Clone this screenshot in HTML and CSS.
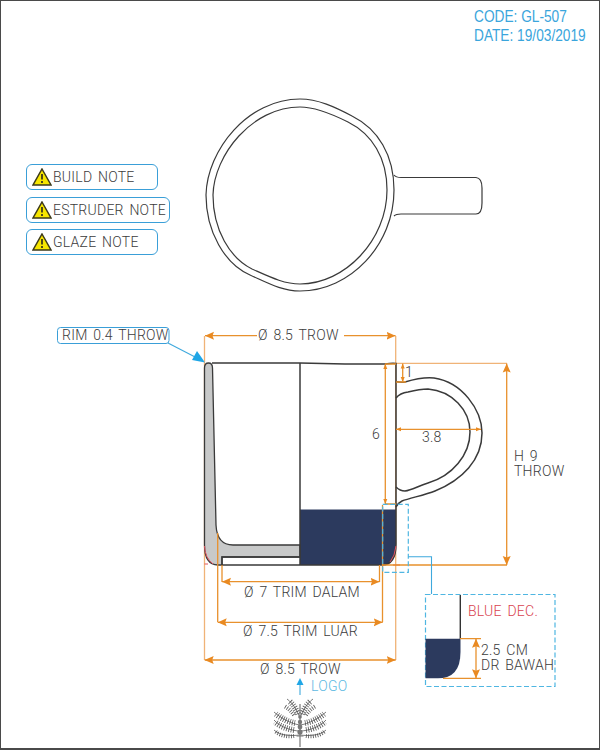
FILE: index.html
```html
<!DOCTYPE html>
<html lang="en">
<head>
    <meta charset="UTF-8">
    <title>GL-507</title>
    <link rel="stylesheet" href="styles.css">
</head>
<body>
    <div class="sheet">
        <svg class="drawing" width="600" height="750" viewBox="0 0 600 750">
            <defs>
                <marker id="arrow" markerUnits="userSpaceOnUse" markerWidth="9" markerHeight="9" refX="9" refY="4.500" orient="auto-start-reverse">
                    <path d="M9 4.500 L0 0.500 L1.500 4.500 L0 8.500 Z" class="fill_orange"/>
                </marker>
                <marker id="arrow_small" markerUnits="userSpaceOnUse" markerWidth="5" markerHeight="5" refX="5" refY="2.500" orient="auto-start-reverse">
                    <path d="M5 2.500 L0 0.500 L0 4.500 Z" class="fill_orange"/>
                </marker>
                <symbol id="branches" viewBox="0 0 30 50" width="30" height="50" overflow="visible">
                    <path class="leaf" d="M28 15 C26 10 23 5 19 2"/>
                    <path class="twig" d="M30 19 C27 12 24 5 17 0"/>
                    <path class="leaf small" d="M24 16 C21 12 18 9 14 7"/>
                    <path class="leaf" d="M25 24 C19 23 12 20 6 15"/>
                    <path class="twig" d="M30 26 C22 25 12 20 4 13"/>
                    <path class="leaf" d="M24 31 C17 30 10 27 5 23"/>
                    <path class="twig" d="M30 32 C22 32 10 28 4 21"/>
                    <path class="leaf small" d="M24 37 C18 38 10 37 5 32"/>
                    <path class="twig" d="M30 36 C22 37 10 37 4 31"/>
                </symbol>
            </defs>

            <!-- top view -->
            <g class="line">
                <path d="M206 195 C207 150 248 99 300 99 C318 99 335 107 352 116 C378 129 394 155 394 190 C394 245 350 291 300 291 C282 291 268 283 250 275 C225 264 206 232 206 195 Z"/>
                <path d="M213 195 C214 155 252 107 300 107 C316 107 332 114 348 122 C372 134 387 158 387 190 C387 240 345 284 300 284 C284 284 270 277 252 269 C230 258 213 230 213 195 Z"/>
                <path d="M394 175 Q396 177.500 401 177.500 L476 177.500 Q482 178 482 188 L482 203 Q482 214 476 214 L401 214 Q396 214 394 216"/>
            </g>

            <!-- dimension lines behind the section -->
            <g class="dim">
                <path class="pale" d="M204.500 336 L204.500 660 M395.700 336 L395.700 660 M396 363.300 L507 363.300"/>
            </g>

            <!-- side view -->
            <path class="navy" d="M300 509.500 L396 509.500 L396 544 Q396 565 382 565 L300 565 Z"/>
            <path class="section" d="M204.500 368 Q204.500 363 208.500 363 Q212.500 363 212.500 368 L216 525 Q217 545 233 545 L300 545 L300 557 L222 557 L222 565 L218 565 C208 565 204.500 556 204.500 545 Z"/>
            <g class="line heavy">
                <path d="M212 363 L300 363 L345 364 L385 364 Q392 363 396 363.500 L396 544 Q396 565 382 565 L222 565 L222 557 L300 557"/>
                <path d="M300 363 L300 565"/>
                <path d="M396 381.500 Q400 382.500 405 382 C415 379 424 377 434 378 C462 382 482 410 482 433 C482 460 462 480 435 491 C425 495 410 498 402 501 Q398 503 396 507"/>
                <path d="M396 398 Q400 393 408 392 C416 390 422 389 428 389 C452 391 470 410 470 432 C470 455 452 476 428 483 C418 486 412 490 405 491 Q400 491 396 487"/>
            </g>
            <path class="red" d="M204.500 546 Q205 558 213 564 M204.500 564 L208 564 M396 546 Q395 556 390 562 M393 565 L400 565"/>

            <!-- dimensions -->
            <g class="dim">
                <path d="M383 565 L507 565 M222 565 L222 582 M379.500 565 L379.500 582 M217.700 533 L217.700 622 M382.500 505 L382.500 622"/>
                <path d="M205 335.700 L257 335.700" marker-start="url(#arrow)"/>
                <path d="M344 335.700 L395.500 335.700" marker-end="url(#arrow)"/>
                <path d="M222 581.700 L379.500 581.700" marker-start="url(#arrow)" marker-end="url(#arrow)"/>
                <path d="M217.700 622.300 L382.700 622.300" marker-start="url(#arrow)" marker-end="url(#arrow)"/>
                <path d="M204.700 660 L395.700 660" marker-start="url(#arrow)" marker-end="url(#arrow)"/>
                <path d="M506.700 363.500 L506.700 565" marker-start="url(#arrow)" marker-end="url(#arrow)"/>
                <path d="M402.700 363.500 L402.700 382" marker-start="url(#arrow_small)" marker-end="url(#arrow_small)"/>
                <path d="M396 382 L406 382 M385 364 L396 364 M385 504 L396 504"/>
                <path d="M385.300 364 L385.300 504" marker-start="url(#arrow_small)" marker-end="url(#arrow_small)"/>
                <path d="M396 429.300 L481 429.300" marker-start="url(#arrow_small)" marker-end="url(#arrow_small)"/>
            </g>

            <!-- detail callout -->
            <rect class="dash" x="382.700" y="504.300" width="25.600" height="68"/>
            <path class="lead" d="M408.300 556.700 L431.500 556.700 L431.500 594"/>
            <rect class="dash" x="425.500" y="594.500" width="129.500" height="92"/>
            <path class="wall" d="M460.300 595 L460.300 639"/>
            <path class="navy" d="M425.500 638.700 L460.500 638.700 L460.500 652 Q460.500 678.300 438 678.300 L425.500 678.300 Z"/>
            <g class="dim">
                <path d="M460 638.700 L481 638.700 M443 678.300 L481 678.300"/>
                <path d="M476 638.700 L476 678.300" marker-start="url(#arrow)" marker-end="url(#arrow)"/>
            </g>

            <!-- rim label -->
            <rect class="tag" x="57.500" y="327.500" width="111.500" height="16" rx="3"/>
            <path class="lead" d="M168 343 L197 358"/>
            <path class="fill_blue" d="M205 362.500 L192 360 L197 351 Z"/>

            <!-- logo arrow and tree -->
            <path class="lead" d="M300 695 L300 684"/>
            <path class="fill_blue" d="M300 678 L303.500 685 L296.500 685 Z"/>
            <g class="tree">
                <use href="#branches" x="270" y="699"/>
                <use href="#branches" x="-330" y="699" transform="scale(-1 1)"/>
                <path class="trunk" d="M300 704 L300 747 M296.500 736 L303.500 736"/>
                <circle cx="300" cy="717" r="1.800"/>
                <circle cx="300" cy="722" r="2.200"/>
                <circle cx="300" cy="727" r="2.400"/>
                <circle cx="300" cy="732" r="2.600"/>
            </g>

            <g class="label">
                <text x="62" y="340">RIM 0.4 THROW</text>
                <text x="258" y="340">Ø 8.5 TROW</text>
                <text x="372" y="439">6</text>
                <text x="405" y="377">1</text>
                <text x="422" y="442">3.8</text>
                <text x="514" y="461">H 9</text>
                <text x="514" y="476">THROW</text>
                <text x="244" y="597">Ø 7 TRIM DALAM</text>
                <text x="243" y="636">Ø 7.5 TRIM LUAR</text>
                <text x="260" y="674">Ø 8.5 TROW</text>
                <text x="481" y="655">2.5 CM</text>
                <text x="481" y="670">DR BAWAH</text>
                <text x="468" y="616" class="red_text">BLUE DEC.</text>
                <text x="311" y="691" class="blue_text">LOGO</text>
            </g>
        </svg>

        <div class="code">
            <div>CODE: GL-507</div>
            <div>DATE: 19/03/2019</div>
        </div>

        <ul class="notes">
            <li class="note">
                <svg class="warn" width="20" height="18" viewBox="0 0 20 18"><path class="warn_tri" d="M10 1 L19 17 L1 17 Z"/><path class="warn_mark" d="M10 6 L10 11.500 M10 13 L10 15"/></svg>
                BUILD NOTE
            </li>
            <li class="note">
                <svg class="warn" width="20" height="18" viewBox="0 0 20 18"><path class="warn_tri" d="M10 1 L19 17 L1 17 Z"/><path class="warn_mark" d="M10 6 L10 11.500 M10 13 L10 15"/></svg>
                ESTRUDER NOTE
            </li>
            <li class="note">
                <svg class="warn" width="20" height="18" viewBox="0 0 20 18"><path class="warn_tri" d="M10 1 L19 17 L1 17 Z"/><path class="warn_mark" d="M10 6 L10 11.500 M10 13 L10 15"/></svg>
                GLAZE NOTE
            </li>
        </ul>
    </div>
</body>
</html>
```
FILE: styles.css
```css
body {
    margin: 0;
    background: #fff;
}

.sheet {
    position: relative;
    box-sizing: border-box;
    width: 600px;
    height: 750px;
    border: 1px solid #4a4a4a;
    border-bottom-width: 2px;
    display: flex;
    flex-direction: column;
    overflow: hidden;
}

.drawing {
    position: absolute;
    left: -1px;
    top: -1px;
}

.code {
    position: relative;
    align-self: flex-end;
    width: 125px;
    padding-top: 6px;
    font-family: "Liberation Sans", sans-serif;
    font-size: 16.500px;
    line-height: 19px;
    color: #3aa5dc;
    white-space: nowrap;
    transform: scaleX(0.83);
    transform-origin: left top;
}

.notes {
    position: relative;
    list-style: none;
    margin: 119px 0 0 25px;
    padding: 0;
    display: flex;
    flex-direction: column;
    align-items: flex-start;
    gap: 6.500px;
}

.note {
    box-sizing: border-box;
    height: 26px;
    min-width: 132px;
    padding: 0 3px 0 5px;
    display: flex;
    align-items: center;
    gap: 1px;
    border: 1.300px solid #3a9fd8;
    border-radius: 6px;
    font-family: Roboto, "Liberation Sans", sans-serif;
    font-weight: 300;
    font-size: 14px;
    letter-spacing: 0.25px;
    word-spacing: 2px;
    color: #3c3c3c;
    white-space: nowrap;
}

.warn_tri {
    fill: #f7e600;
    stroke: #3d3a1a;
    stroke-width: 1.500;
}

.warn_mark {
    fill: none;
    stroke: #3d3a1a;
    stroke-width: 1.800;
}

/* drawing */
.line path {
    fill: none;
    stroke: #3a3a3a;
    stroke-width: 1.200;
}

.line.heavy path {
    stroke-width: 1.500;
}

.section {
    fill: #c8c9c9;
    stroke: #3a3a3a;
    stroke-width: 1.300;
}

.navy {
    fill: #2c3a5e;
}

.red {
    fill: none;
    stroke: #e2545f;
    stroke-width: 1;
}

.dim path {
    fill: none;
    stroke: #e8912d;
    stroke-width: 1.300;
}

.dim path.pale {
    stroke: #f0b377;
}

.fill_orange,
.dim path.fill_orange {
    fill: #e98a22;
    stroke: none;
}

.dash {
    fill: none;
    stroke: #4fb6e2;
    stroke-width: 1.200;
    stroke-dasharray: 5 2.500;
}

.lead {
    fill: none;
    stroke: #3fa9dd;
    stroke-width: 1.100;
}

.fill_blue {
    fill: #1fa6e6;
}

.wall {
    stroke: #333;
    stroke-width: 1.400;
}

.tag {
    fill: #fff;
    stroke: #3a9fd8;
    stroke-width: 1;
}

.label text {
    font-family: Roboto, "Liberation Sans", sans-serif;
    font-weight: 300;
    font-size: 14px;
    letter-spacing: 0.25px;
    word-spacing: 2px;
    fill: #3c3c3c;
}

.label .red_text {
    fill: #d9434f;
}

.label .blue_text {
    fill: #5db9e2;
}

.twig {
    fill: none;
    stroke: #444;
    stroke-width: 0.700;
}

.trunk {
    fill: none;
    stroke: #777;
    stroke-width: 1.200;
}

.leaf {
    fill: none;
    stroke: #555;
    stroke-width: 6;
    stroke-dasharray: 0.800 1.500;
}

.leaf.small {
    stroke-width: 4;
}

.tree circle {
    fill: #777;
}
```
